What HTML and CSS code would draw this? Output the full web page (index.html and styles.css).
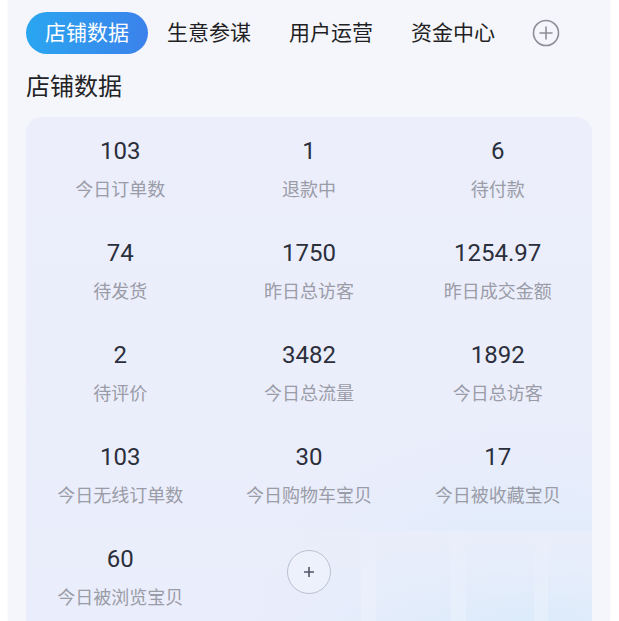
FILE: index.html
```html
<!DOCTYPE html>
<html lang="zh-CN">
<head>
<meta charset="utf-8">
<title>店铺数据</title>
<link rel="stylesheet" href="styles.css">
</head>
<body>
<div class="panel">
  <nav class="tabs">
    <span class="tab active">店铺数据</span>
    <span class="tab">生意参谋</span>
    <span class="tab">用户运营</span>
    <span class="tab">资金中心</span>
    <span class="tab-add"><svg viewBox="0 0 28 28" width="28" height="28"><circle cx="14" cy="14" r="12.5" fill="none" stroke="#8d8f96" stroke-width="1.6"/><path d="M14 7.5v13M7.5 14h13" stroke="#8d8f96" stroke-width="1.6" fill="none"/></svg></span>
  </nav>
  <h2 class="heading">店铺数据</h2>
  <section class="card">
    <div class="grid">
      <div class="cell"><div class="num">103</div><div class="label">今日订单数</div></div>
      <div class="cell"><div class="num">1</div><div class="label">退款中</div></div>
      <div class="cell"><div class="num">6</div><div class="label">待付款</div></div>
      <div class="cell"><div class="num">74</div><div class="label">待发货</div></div>
      <div class="cell"><div class="num">1750</div><div class="label">昨日总访客</div></div>
      <div class="cell"><div class="num">1254.97</div><div class="label">昨日成交金额</div></div>
      <div class="cell"><div class="num">2</div><div class="label">待评价</div></div>
      <div class="cell"><div class="num">3482</div><div class="label">今日总流量</div></div>
      <div class="cell"><div class="num">1892</div><div class="label">今日总访客</div></div>
      <div class="cell"><div class="num">103</div><div class="label">今日无线订单数</div></div>
      <div class="cell"><div class="num">30</div><div class="label">今日购物车宝贝</div></div>
      <div class="cell"><div class="num">17</div><div class="label">今日被收藏宝贝</div></div>
      <div class="cell"><div class="num">60</div><div class="label">今日被浏览宝贝</div></div>
      <div class="cell add-cell"><span class="add-btn"><svg viewBox="0 0 12 12" width="12" height="12"><path d="M6 1v10M1 6h10" stroke="#4f5668" stroke-width="1.6" fill="none"/></svg></span></div>
    </div>
  </section>
</div>
</body>
</html>
```

FILE: styles.css
```css
html, body {
  margin: 0;
  padding: 0;
  background: #ffffff;
  height: 100%;
  overflow: hidden;
}
body {
  font-family: Roboto, "Noto Sans CJK SC", "Noto Sans", sans-serif;
}
.panel {
  box-sizing: border-box;
  margin: 0 9px 0 8px;
  background: #f5f6fb;
  height: 621px;
  padding: 12px 18px 0 18px;
  box-shadow: 0 0 2px rgba(0,0,0,0.05);
}
.tabs {
  display: flex;
  align-items: center;
  height: 42px;
}
.tab {
  font-size: 21px;
  color: #1f1f24;
  padding: 0 19px;
  line-height: 42px;
  white-space: nowrap;
}
.tab.active {
  color: #fff;
  border-radius: 21px;
  background: linear-gradient(90deg, #2aa6f0 0%, #3b82eb 100%);
  padding: 0 19px;
}
.tab-add {
  display: flex;
  margin-left: 18px;
}
.heading {
  margin: 16px 0 13px;
  font-size: 24px;
  line-height: 34px;
  font-weight: normal;
  color: #232326;
}
.card {
  box-sizing: border-box;
  border-radius: 16px 16px 0 0;
  background:
    linear-gradient(180deg, rgba(234,238,251,1) 0%, rgba(234,238,251,0) 100%) bottom / 100% 90px no-repeat,
    linear-gradient(90deg, transparent 0 335px, rgba(255,255,255,0.22) 335px 350px, transparent 350px 425px, rgba(255,255,255,0.2) 425px 440px, transparent 440px 508px, rgba(255,255,255,0.22) 508px 522px, transparent 522px) bottom / 100% 90px no-repeat,
    radial-gradient(ellipse 280px 200px at 90% 100%, #dcebfa 0%, rgba(220,235,250,0.6) 45%, rgba(234,236,251,0) 100%),
    linear-gradient(180deg, #eceefb 0%, #eaedfb 100%);
  padding-top: 19px;
  height: 504px;
}
.grid {
  display: grid;
  grid-template-columns: repeat(3, 1fr);
  row-gap: 36px;
}
.cell {
  display: flex;
  flex-direction: column;
  align-items: center;
}
.num {
  font-size: 24px;
  line-height: 30px;
  color: #2b2f3b;
}
.label {
  margin-top: 12px;
  font-size: 18px;
  line-height: 24px;
  color: #9a9ca7;
  white-space: nowrap;
}
.add-cell {
  justify-content: flex-start;
  padding-top: 6px;
}
.add-btn {
  width: 42px;
  height: 42px;
  border: 1.5px solid #b8c2d4;
  border-radius: 50%;
  display: flex;
  align-items: center;
  justify-content: center;
  background: rgba(240,243,252,0.6);
}
```
